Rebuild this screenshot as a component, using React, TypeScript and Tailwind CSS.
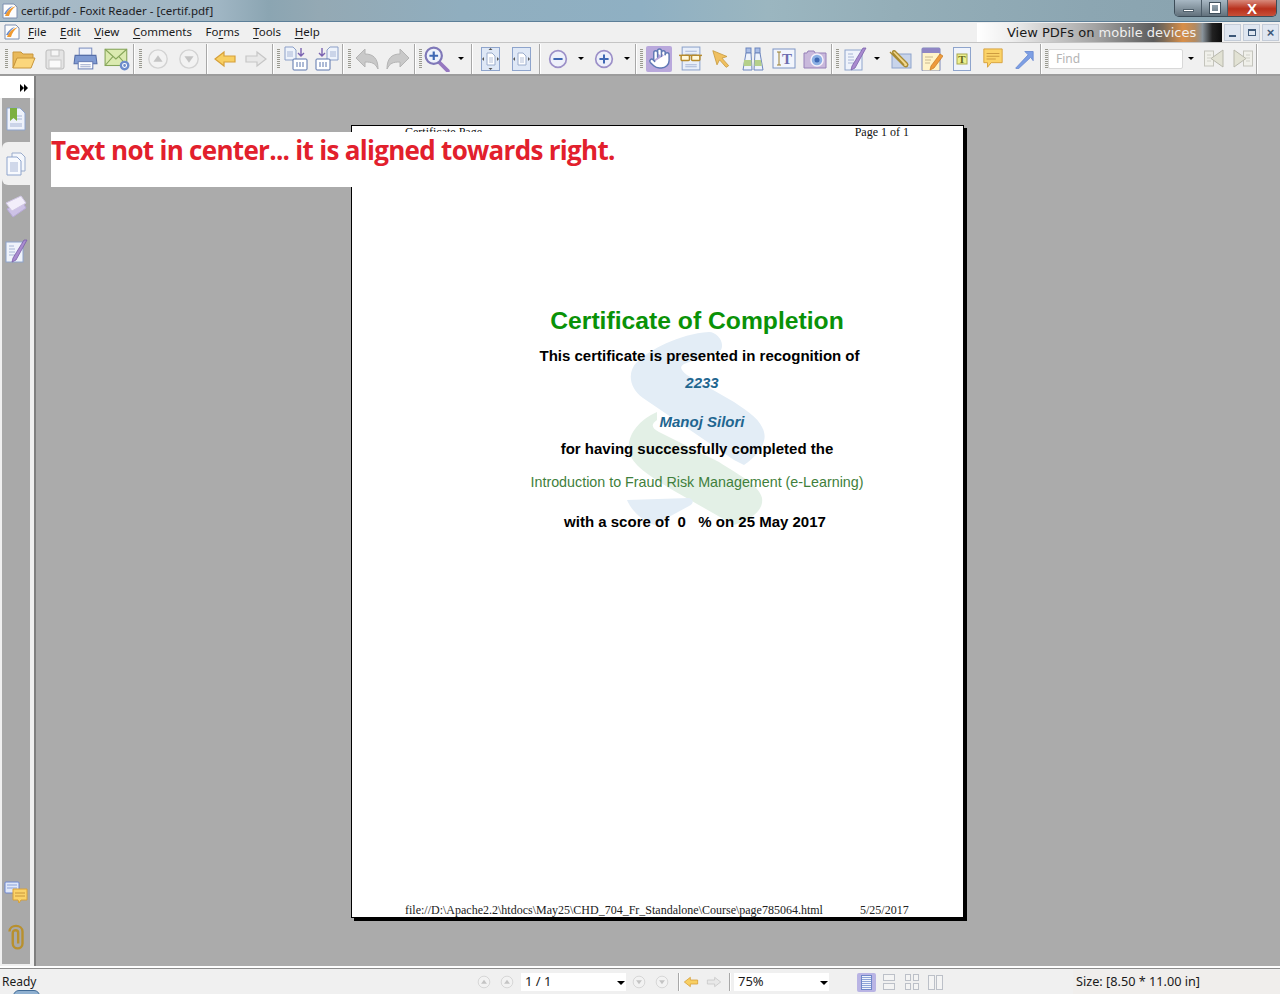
import type { ReactNode } from "react";
import { Hand } from "lucide-react";

const UI_FONT = "font-['Noto_Sans',sans-serif]";

function Ico({ children, size = 24 }: { children: ReactNode; size?: number }) {
  return (
    <svg width={size} height={size} viewBox="0 0 24 24" className="shrink-0">
      {children}
    </svg>
  );
}

function Slot({ children, w = "w-[31px]" }: { children: ReactNode; w?: string }) {
  return <div className={`${w} h-full shrink-0 flex items-center justify-center`}>{children}</div>;
}

function Sep({ className = "" }: { className?: string }) {
  return <div className={`w-[2px] h-[30px] shrink-0 bg-[#a8a8a8] border-r border-white ${className}`} />;
}

function Grip({ className = "" }: { className?: string }) {
  return <div className={`w-[3px] h-[20px] shrink-0 bg-[repeating-linear-gradient(180deg,#9a9a90_0_1px,#f0f0f0_1px_2px)] ${className}`} />;
}

function Caret({ w = "w-[16px]" }: { w?: string }) {
  return (
    <div className={`${w} h-full shrink-0 flex items-center justify-center`}>
      <div className="w-0 h-0 border-x-[3px] border-x-transparent border-t-[3px] border-t-black" />
    </div>
  );
}

const Folder = () => (
  <Ico>
    <path d="M1 5h8l2 2h10v5H5l-4 9z" fill="#e9b95a" stroke="#c8963c" />
    <path d="M1 21l4-10h18l-4 10z" fill="#fbd67c" stroke="#c8963c" />
  </Ico>
);
const Disk = () => (
  <Ico>
    <rect x="3" y="3" width="18" height="19" rx="2" fill="#e4e4e4" stroke="#bcbcbc" />
    <rect x="8" y="3" width="8" height="6" fill="#f6f6f6" stroke="#c4c4c4" />
    <rect x="6" y="13" width="12" height="8" fill="#fafafa" stroke="#c8c8c8" />
  </Ico>
);
const Printer = () => (
  <Ico size={25}>
    <rect x="6" y="2" width="12" height="7" fill="#eef1fa" stroke="#7d8fc0" />
    <path d="M2 9h20l1 8H1z" fill="#7f9ad2" stroke="#566ea8" />
    <rect x="5" y="15" width="14" height="7" fill="#fff" stroke="#6a7fb5" />
    <path d="M7 18h10M7 20h10" stroke="#9aa8cc" />
  </Ico>
);
const Mail = () => (
  <Ico size={26}>
    <rect x="1" y="3" width="20" height="15" fill="#dbeab0" stroke="#86a65a" />
    <path d="M1 3l10 9 10-9M1 18l7-8M21 18l-7-8" fill="none" stroke="#86a65a" />
    <circle cx="19" cy="18" r="4.5" fill="#6c8bcb" />
    <circle cx="19" cy="18" r="1.8" fill="none" stroke="#fff" />
  </Ico>
);
const NavCircle = ({ up, size = 22 }: { up?: boolean; size?: number }) => (
  <Ico size={size}>
    <circle cx="12" cy="12" r="10" fill="#f2f2f2" stroke="#d2d2d2" strokeWidth="1.5" />
    <path d={up ? "M7 15l5-7 5 7z" : "M7 9l5 7 5-7z"} fill="#c4c4c4" />
  </Ico>
);
const ArrowL = ({ on, size = 24 }: { on?: boolean; size?: number }) => (
  <Ico size={size}>
    <path d="M2 12l9-7v4h11v6H11v4z" fill={on ? "#f8cf62" : "#e8e8e8"} stroke={on ? "#d6a03a" : "#c6c6c6"} strokeWidth="1.2" />
  </Ico>
);
const ArrowR = ({ on, size = 24 }: { on?: boolean; size?: number }) => (
  <Ico size={size}>
    <path d="M22 12l-9-7v4H2v6h11v4z" fill={on ? "#f8cf62" : "#e8e8e8"} stroke={on ? "#d6a03a" : "#c6c6c6"} strokeWidth="1.2" />
  </Ico>
);
const Extract = ({ flip }: { flip?: boolean }) => (
  <svg width="24" height="25" viewBox="0 0 24 25" className="shrink-0" style={flip ? { transform: "scaleX(-1)" } : undefined}>
    <path d="M1 1h8l3 3v10H1z" fill="#eef3fb" stroke="#8b9fc8" />
    <path d="M3 6h6M3 8h6M3 10h6" stroke="#a8b6d6" />
    <path d="M17 2v7M14 7l3 3 3-3" fill="none" stroke="#7a62b0" strokeWidth="1.4" />
    <rect x="9" y="13" width="14" height="11" rx="1" fill="#fff" stroke="#5a74ac" />
    <path d="M13 16v5M16 16v5M19 16v5" stroke="#5a74ac" />
  </svg>
);
const Undo = ({ flip }: { flip?: boolean }) => (
  <svg width="24" height="24" viewBox="0 0 24 24" className="shrink-0" style={flip ? { transform: "scaleX(-1)" } : undefined}>
    <path d="M1 11l9-9v5c8 0 13 4 13 15-3-6-6-7-13-7v5z" fill="#c9c9c9" stroke="#b4b4b4" />
  </svg>
);
const Zoom = () => (
  <Ico size={26}>
    <path d="M14 15l8 8" stroke="#9678c0" strokeWidth="3.5" strokeLinecap="round" />
    <circle cx="9" cy="9" r="7.5" fill="#eef2fb" stroke="#7f78b8" strokeWidth="2" />
    <path d="M5 9h8M9 5v8" stroke="#3f68b4" strokeWidth="2" />
  </Ico>
);
const FitDoc = ({ full }: { full?: boolean }) => (
  <svg width="19" height="24" viewBox="0 0 19 24" className="shrink-0">
    <rect x="0.5" y="0.5" width="18" height="23" fill="#dfe8f6" stroke="#8ea4cc" />
    <path d="M6 6h5l3 3v9H6z" fill="#fff" stroke="#9aaccc" />
    <path d="M8 11h4M8 13h4M8 15h4" stroke="#b4c0d8" />
    <path d="M1 12l2-2v4zM18 12l-2-2v4z" fill="#555" />
    {full && <path d="M9.500 1l-2 2h4zM9.500 23l-2-2h4z" fill="#555" />}
  </svg>
);
const MathCircle = ({ plus }: { plus?: boolean }) => (
  <Ico size={20}>
    <circle cx="12" cy="12" r="10" fill="#eef0fa" stroke="#9c90c8" strokeWidth="2" />
    <path d={plus ? "M6.500 12h11M12 6.500v11" : "M6.500 12h11"} stroke="#3f68b4" strokeWidth="2.4" />
  </Ico>
);
const Glasses = () => (
  <Ico size={25}>
    <rect x="4" y="1" width="17" height="22" fill="#e9eff9" stroke="#8ea4cc" />
    <path d="M7 5h11M7 8h11M7 18h11M7 20h11" stroke="#a8b6d6" />
    <path d="M1 9h22" stroke="#b68a2c" strokeWidth="1.4" />
    <rect x="3" y="9" width="8" height="5" rx="1" fill="#fff8dc" stroke="#b68a2c" strokeWidth="1.4" />
    <rect x="13" y="9" width="8" height="5" rx="1" fill="#fff8dc" stroke="#b68a2c" strokeWidth="1.4" />
  </Ico>
);
const Cursor = () => (
  <Ico size={20}>
    <path d="M1 2l17 7-6 2 8 9-3 2-8-9-3 6z" fill="#f0c060" stroke="#c89a3c" />
  </Ico>
);
const Binoculars = () => (
  <Ico>
    <rect x="5" y="1" width="5" height="5" fill="#a9bde6" stroke="#6d86bd" />
    <rect x="14" y="1" width="5" height="5" fill="#a9bde6" stroke="#6d86bd" />
    <path d="M5 6h5l1 17H2zM14 6h5l3 17h-9z" fill="#edf2fb" stroke="#6d86bd" />
    <path d="M3 13h7.500v6H2.500zM13.500 13H20l.8 6h-7.300z" fill="#b5d08a" />
  </Ico>
);
const TextSel = () => (
  <Ico>
    <rect x="1" y="2" width="22" height="19" fill="#f2f5fc" stroke="#7d94c4" />
    <path d="M7 5v13M5 5h4M5 18h4" stroke="#9a8030" />
    <text x="15" y="17" textAnchor="middle" fontFamily="Liberation Serif" fontSize="15" fontWeight="700" fill="#6d6db0">T</text>
  </Ico>
);
const Camera = () => (
  <Ico>
    <path d="M1 6h3l1-2h6l1 2h11v15H1z" fill="#c9b9dc" stroke="#9680b8" />
    <circle cx="14" cy="13" r="6" fill="#8cb0e4" stroke="#f4f0fa" strokeWidth="1.5" />
    <circle cx="14" cy="13" r="2.500" fill="#3f68b4" />
  </Ico>
);
const TypeDoc = ({ size = 24 }: { size?: number }) => (
  <Ico size={size}>
    <rect x="2" y="3" width="17" height="20" fill="#eff3fb" stroke="#8ea4cc" />
    <path d="M5 7h5M5 10h6M5 13h6M5 16h6" stroke="#a8b6d6" />
    <path d="M23 1l-3 0L9 19l-1 4 4-2z" fill="#a98bd0" stroke="#7a60a8" strokeWidth="0.8" />
  </Ico>
);
const Attach = () => (
  <Ico>
    <rect x="4" y="7" width="19" height="14" fill="#c8d4ea" stroke="#8ea4cc" />
    <path d="M2 5l14 14c3 2 5-1 3-3L7 4C5 3 4 5 5 6l11 12" fill="#f2d890" stroke="#a88a30" strokeWidth="1.4" />
  </Ico>
);
const PaperClip = () => (
  <Ico size={26}>
    <path d="M6 7c0-7 12-7 12 0v11c0 6-9 6-9 0V8c0-3 5-3 5 0v10" fill="none" stroke="#b8902e" strokeWidth="2.2" />
  </Ico>
);
const Note = () => (
  <Ico>
    <rect x="3" y="1" width="18" height="23" rx="1" fill="#fff3c8" stroke="#7d88b8" />
    <rect x="3" y="1" width="18" height="5" fill="#8f86c4" />
    <path d="M6 10h8M6 13h6M6 16h5" stroke="#c8b890" />
    <path d="M21 7l3 2-9 12-4 2 1-4z" fill="#ee9a3c" stroke="#c47820" strokeWidth="0.7" />
  </Ico>
);
const TextBox = () => (
  <svg width="18" height="24" viewBox="0 0 18 24" className="shrink-0">
    <rect x="0.5" y="0.5" width="17" height="23" fill="#eff3fb" stroke="#8ea4cc" />
    <rect x="4" y="7" width="10" height="10" fill="#ecf090" stroke="#a8a850" />
    <text x="9" y="16" textAnchor="middle" fontFamily="Liberation Serif" fontSize="11" fontWeight="700" fill="#686820">T</text>
  </svg>
);
const Bubble = () => (
  <Ico size={22}>
    <path d="M2 1h20v15H10l-4 5v-5H2z" fill="#fbd368" stroke="#d6a03a" />
    <path d="M5 6h14M5 9h14M5 12h10" stroke="#c8963c" />
  </Ico>
);
const BlueArrow = () => (
  <Ico size={20}>
    <path d="M2 23L17 7l-4-4h10v11l-3-4L5 24z" fill="#7d9fe4" stroke="#6888d0" />
  </Ico>
);
const FindNav = ({ flip }: { flip?: boolean }) => (
  <svg width="20" height="19" viewBox="0 0 20 19" className="shrink-0" style={flip ? { transform: "scaleX(-1)" } : undefined}>
    <rect x="0.500" y="2" width="9" height="15" fill="#f0f0ea" stroke="#c4c4bc" />
    <path d="M3 6h4M3 9h4M3 12h4" stroke="#d0d0c8" />
    <path d="M19 1L7 9.500 19 18z" fill="#e2e2d4" stroke="#b8b8ac" />
  </svg>
);

function Toolbar() {
  return (
    <div className="h-[33px] flex items-center pl-[5px] bg-[#f0f0f0] border-b-[2px] border-[#9c9c9c]">
      <Grip />
      <Slot><Folder /></Slot>
      <Slot><Disk /></Slot>
      <Slot><Printer /></Slot>
      <Slot><Mail /></Slot>
      <Sep className="ml-[1px]" />
      <Grip className="ml-[4px]" />
      <Slot><NavCircle up /></Slot>
      <Slot><NavCircle /></Slot>
      <Sep className="ml-[2px] mr-[1px]" />
      <Slot><ArrowL on /></Slot>
      <Slot><ArrowR /></Slot>
      <Sep className="ml-[1px]" />
      <Grip className="ml-[3px]" />
      <Slot><Extract /></Slot>
      <Slot><Extract flip /></Slot>
      <Sep />
      <Grip className="ml-[4px]" />
      <Slot><Undo /></Slot>
      <Slot><Undo flip /></Slot>
      <Sep className="ml-[1px]" />
      <Grip className="ml-[3px]" />
      <Slot w="w-[29px]"><Zoom /></Slot>
      <Caret w="w-[20px]" />
      <Sep />
      <div className="w-[2px]" />
      <Slot><FitDoc full /></Slot>
      <Slot><FitDoc /></Slot>
      <Sep className="mx-[2px]" />
      <Slot w="w-[30px]"><MathCircle /></Slot>
      <Caret w="w-[15px]" />
      <Slot><MathCircle plus /></Slot>
      <Caret />
      <Sep />
      <Grip className="ml-[3px]" />
      <Slot w="w-[32px]">
        <div className="w-[26px] h-[26px] rounded-[2px] bg-[#b9a8dc] flex items-center justify-center">
          <Hand size={23} fill="#fff" color="#5f78b4" strokeWidth={1.5} />
        </div>
      </Slot>
      <Slot><Glasses /></Slot>
      <Slot><Cursor /></Slot>
      <Slot><Binoculars /></Slot>
      <Slot><TextSel /></Slot>
      <Slot><Camera /></Slot>
      <Sep className="ml-[1px]" />
      <Grip className="ml-[3px]" />
      <Slot><TypeDoc /></Slot>
      <Caret w="w-[14px]" />
      <Slot><Attach /></Slot>
      <Slot><Note /></Slot>
      <Slot><TextBox /></Slot>
      <Slot><Bubble /></Slot>
      <Slot><BlueArrow /></Slot>
      <Sep className="ml-[1px]" />
      <Grip className="ml-[3px]" />
      <div className="w-[135px] h-[20px] bg-white border border-[#d8d8d8] rounded-[2px] pl-[7px] text-[12px] leading-[18px] text-[#b4b4b4]">
        Find
      </div>
      <Caret w="w-[16px]" />
      <Slot w="w-[30px]"><FindNav /></Slot>
      <Slot w="w-[27px]"><FindNav flip /></Slot>
      <Sep />
    </div>
  );
}

function MenuItem({ k, rest, pre = "" }: { k: string; rest: string; pre?: string }) {
  return (
    <span>
      {pre}
      <span className="underline underline-offset-2">{k}</span>
      {rest}
    </span>
  );
}

function WinBtn({ children }: { children: ReactNode }) {
  return (
    <div className="w-[17px] h-[17px] border border-[#c4ccd8] bg-[#dfe6f0] flex items-center justify-center text-[#3d5878]">
      {children}
    </div>
  );
}

function AppLogo() {
  return (
    <svg width="16" height="16" viewBox="0 0 16 16" className="shrink-0">
      <path d="M1 1h11l3 3v11H1z" fill="#fdfdfd" stroke="#7d8fb0" />
      <path d="M3 13C5 7 9 5 14 3 10 6 8 9 7 13z" fill="#f09a30" />
      <path d="M2 11c2-4 5-7 9-8-3 2-6 5-7 8z" fill="#6a8ac8" />
    </svg>
  );
}

function TitleBar() {
  return (
    <div className="h-[22px] flex items-start border-b border-[#5d7f98] bg-[linear-gradient(90deg,#a9bbc8_0%,#a0b6c4_17%,#8ba5b2_21%,#94a9b4_25%,#90aebf_36%,#8fb0c3_50%,#9bb6c0_60%,#94aeb8_70%,#8ca6b2_85%,#88a2ae_100%)]">
      <div className="w-[21px] h-full pl-[2px] pt-[3px]">
        <AppLogo />
      </div>
      <span className={`text-[11.500px] leading-[21px] text-[#1c2024] ${UI_FONT}`}>certif.pdf - Foxit Reader - [certif.pdf]</span>
      <div className="ml-auto mr-[3px] w-[103px] h-[17px] flex rounded-b-[5px] overflow-hidden border border-t-0 border-[#3c4c58]">
        <div className="w-[27px] bg-[linear-gradient(180deg,#a8b8c4,#62717c)] flex items-center justify-center border-r border-[#4c5c68]">
          <div className="w-[11px] h-[3px] mt-[4px] bg-white border border-[#50606c]" />
        </div>
        <div className="w-[26px] bg-[linear-gradient(180deg,#a8b8c4,#62717c)] flex items-center justify-center border-r border-[#4c5c68]">
          <div className="w-[10px] h-[10px] border-2 border-white outline outline-[#40505c]" />
        </div>
        <div className="flex-1 bg-[linear-gradient(180deg,#d88a7c,#b8301c_55%,#c85038)] flex items-center justify-center text-white text-[15px] leading-none font-bold font-['Liberation_Sans',sans-serif]">
          X
        </div>
      </div>
    </div>
  );
}

function MenuBar() {
  return (
    <div className={`h-[21px] flex items-center bg-[#f0f0f0] border-b border-[#c4c4c4] text-[11.500px] text-[#1a1a1a] ${UI_FONT}`}>
      <div className="w-[28px] pl-[4px] shrink-0">
        <AppLogo />
      </div>
      <div className="flex gap-[13.600px] pb-[1px]">
        <MenuItem k="F" rest="ile" />
        <MenuItem k="E" rest="dit" />
        <MenuItem k="V" rest="iew" />
        <MenuItem k="C" rest="omments" />
        <MenuItem pre="Fo" k="r" rest="ms" />
        <MenuItem k="T" rest="ools" />
        <MenuItem k="H" rest="elp" />
      </div>
      <div className="ml-auto w-[245px] h-[19px] mr-[2px] pl-[30px] overflow-hidden whitespace-nowrap text-[13px] leading-[19px] font-['DejaVu_Sans',sans-serif] bg-[linear-gradient(90deg,#ffffff_0%,#eeeeee_14%,#a4a4a4_48%,#5c5c5c_72%,#7a6a58_76%,#d88e48_84%,#b48a60_89%,#8a949c_92%,#222222_96%,#0c0c0c_100%)]">
        <span className="text-[#1a1a1a]">View PDFs on </span>
        <span className="text-[#efefef]">mobile devices</span>
      </div>
      <div className="flex gap-[2px] pr-[1px]">
        <WinBtn><div className="w-[7px] h-[2px] bg-[#3d5878] mt-[7px]" /></WinBtn>
        <WinBtn><div className="w-[8px] h-[7px] border border-[#3d5878] border-t-2" /></WinBtn>
        <WinBtn><span className="text-[13px] leading-none font-bold font-['Liberation_Sans',sans-serif]">×</span></WinBtn>
      </div>
    </div>
  );
}

function Sidebar() {
  return (
    <div className="w-[36px] shrink-0 flex flex-col bg-[#f0f0f0] border-r-2 border-[#7f7f7f]">
      <div className="h-[22px] bg-white flex items-center justify-end pr-[6px] pt-[1px]">
        <div className="flex">
          <div className="w-0 h-0 border-y-[4px] border-y-transparent border-l-[4px] border-l-black" />
          <div className="w-0 h-0 border-y-[4px] border-y-transparent border-l-[4px] border-l-black" />
        </div>
      </div>
      <div className="flex-1 ml-[2px] mr-[4px] mb-[2px] bg-[#a9a9a9] flex flex-col">
        <div className="h-[44px] pb-[3px] flex items-center justify-center">
          <svg width="20" height="24" viewBox="0 0 20 24">
            <path d="M1 1h13l5 5v17H1z" fill="#eef2fb" stroke="#8ea4cc" />
            <path d="M4 1h7v13l-3.500-3L4 14z" fill="#7db040" />
            <path d="M4 17h12M4 19h12M11 9h5M11 12h5" stroke="#a8b6d6" />
          </svg>
        </div>
        <div className="h-[43px] bg-[#f0f0f0] rounded-l-[6px] flex items-center justify-center">
          <svg width="20" height="24" viewBox="0 0 20 24">
            <path d="M6 1h9l4 4v14H6z" fill="#f4f7fc" stroke="#9aaccc" />
            <path d="M1 5h10l4 4v14H1z" fill="#f8fafe" stroke="#8ea4cc" />
            <path d="M4 11h8M4 13h8M4 15h8M4 17h8M4 19h8" stroke="#a8b6d6" />
          </svg>
        </div>
        <div className="h-[44px] flex items-center justify-center">
          <svg width="22" height="24" viewBox="0 0 22 24">
            <path d="M2 14l15-8 4 7-13 9z" fill="#cdc2e6" stroke="#b8aad8" />
            <path d="M1 8l15-7 5 7-14 8z" fill="#f2eefa" stroke="#d0c6e4" />
          </svg>
        </div>
        <div className="h-[44px] flex items-center justify-center">
          <TypeDoc />
        </div>
        <div className="flex-1" />
        <div className="h-[44px] flex items-center justify-center">
          <svg width="24" height="24" viewBox="0 0 24 24">
            <rect x="1" y="1" width="14" height="11" rx="1" fill="#dfe8fa" stroke="#6d86d0" />
            <path d="M3 4h10M3 7h10" stroke="#8aa0d8" />
            <path d="M9 8h14v11h-6l-2 3-1-3H9z" fill="#fbd368" stroke="#d6a03a" />
            <path d="M11 12h10M11 15h10" stroke="#c8963c" />
          </svg>
        </div>
        <div className="h-[44px] mb-[5px] flex items-center justify-center">
          <PaperClip />
        </div>
      </div>
    </div>
  );
}

function Watermark() {
  return (
    <svg width="170" height="220" viewBox="0 0 170 220" className="absolute left-[257px] top-[194px]">
      <path d="M100 12C70 14 40 30 28 42 18 52 20 68 34 78L125 140 135 145C150 135 158 122 155 112 152 100 140 92 125 82L78 55C72 50 70 47 75 44L112 30C116 22 108 12 100 12Z" fill="#e3edf6" />
      <path d="M48 92C30 100 18 115 20 130 22 145 40 155 60 168L125 205C142 200 155 190 153 178 150 165 130 155 110 142L50 112C42 108 42 104 48 100Z" fill="#e3f0e6" />
      <path d="M18 180L80 178C85 180 85 183 80 186L45 205C32 200 22 190 18 180Z" fill="#e3edf6" />
    </svg>
  );
}

function PdfPage() {
  return (
    <div className="relative w-[613px] h-[793px] mt-[49px] ml-[315px] bg-white border border-black shadow-[3px_3px_0_#000] flex flex-col font-['Liberation_Sans',sans-serif]">
      <Watermark />
      <div className="h-[13px] flex justify-between pl-[53px] pr-[54px] text-[12px] leading-[12px] text-[#111] font-['Liberation_Serif',serif]">
        <span>Certificate Page</span>
        <span>Page 1 of 1</span>
      </div>
      <div className="relative ml-[79px] text-center pt-[167px]">
        <h1 className="text-[24.700px] leading-[29px] font-bold text-[#0a9207]">Certificate of Completion</h1>
        <p className="mt-[12px] pl-[5px] text-[15px] leading-[17px] font-bold text-black">This certificate is presented in recognition of</p>
        <p className="mt-[10px] pl-[10px] text-[15px] leading-[17px] font-bold italic text-[#1f6690]">2233</p>
        <p className="mt-[22px] pl-[10px] text-[15px] leading-[17px] font-bold italic text-[#1f6690]">Manoj Silori</p>
        <p className="mt-[10px] text-[15px] leading-[17px] font-bold text-black">for having successfully completed the</p>
        <p className="mt-[17px] text-[14.300px] leading-[17px] text-[#3f7f3c]">Introduction to Fraud Risk Management (e-Learning)</p>
        <p className="mt-[22px] pr-[4px] text-[15px] leading-[17px] font-bold text-black whitespace-pre">with a score of  0   % on 25 May 2017</p>
      </div>
      <div className="mt-auto pl-[53px] flex text-[12px] leading-[13px] text-[#222] font-['Liberation_Serif',serif]">
        <span className="w-[455px]">file://D:\Apache2.2\htdocs\May25\CHD_704_Fr_Standalone\Course\page785064.html</span>
        <span>5/25/2017</span>
      </div>
    </div>
  );
}

function StatusBar() {
  return (
    <div className={`h-[28px] border-t-2 border-[#fefefe] shadow-[inset_0_1px_0_#8c8c8c] bg-[#f0f0f0] flex items-center text-[12px] text-[#1a1a1a] pt-[2px] relative overflow-hidden ${UI_FONT}`}>
      <span className="w-[473px] pl-[2px] shrink-0">Ready</span>
      <Slot w="w-[22px]"><NavCircle up size={14} /></Slot>
      <Slot w="w-[24px]"><NavCircle up size={14} /></Slot>
      <div className="w-[105px] h-[18px] ml-[2px] bg-white pl-[4px] flex items-center shrink-0 relative text-[13px]">
        1 / 1
        <div className="absolute right-[1px] top-[8px] w-0 h-0 border-x-[4px] border-x-transparent border-t-[4px] border-t-black" />
      </div>
      <Slot w="w-[26px]"><NavCircle size={14} /></Slot>
      <Slot w="w-[20px]"><NavCircle size={14} /></Slot>
      <Sep className="ml-[6px] !h-[18px]" />
      <Slot w="w-[22px]"><ArrowL on size={16} /></Slot>
      <Slot w="w-[24px]"><ArrowR size={16} /></Slot>
      <Sep className="ml-[3px] !h-[18px]" />
      <div className="w-[95px] h-[18px] ml-[3px] bg-white pl-[4px] flex items-center shrink-0 relative text-[13px]">
        75%
        <div className="absolute right-[1px] top-[8px] w-0 h-0 border-x-[4px] border-x-transparent border-t-[4px] border-t-black" />
      </div>
      <div className="w-[28px] shrink-0" />
      <div className="w-[19px] h-[19px] rounded-[2px] bg-[#b9b4e4] flex items-center justify-center shrink-0">
        <div className="w-[11px] h-[15px] border border-[#6f86c8] bg-[repeating-linear-gradient(180deg,#f0f4fc_0_1px,#8ea4d8_1px_2px)]" />
      </div>
      <Slot w="w-[26px]">
        <div className="w-[12px] flex flex-col gap-[2px]">
          <div className="h-[7px] border border-[#bcc0c8] bg-[#f4f4f4]" />
          <div className="h-[7px] border border-[#bcc0c8] bg-[#f4f4f4]" />
        </div>
      </Slot>
      <Slot w="w-[20px]">
        <div className="w-[14px] grid grid-cols-2 gap-[2px]">
          <div className="h-[7px] border border-[#bcc0c8] bg-[#f4f4f4]" />
          <div className="h-[7px] border border-[#bcc0c8] bg-[#f4f4f4]" />
          <div className="h-[7px] border border-[#bcc0c8] bg-[#f4f4f4]" />
          <div className="h-[7px] border border-[#bcc0c8] bg-[#f4f4f4]" />
        </div>
      </Slot>
      <Slot w="w-[26px]">
        <div className="flex gap-[1px]">
          <div className="w-[7px] h-[15px] border border-[#bcc0c8] bg-[#f4f4f4]" />
          <div className="w-[7px] h-[15px] border border-[#bcc0c8] bg-[#f4f4f4]" />
        </div>
      </Slot>
      <div className="ml-auto w-[207px] h-full pl-[3px] flex items-center bg-[#f0eeec] text-[12.700px]">Size: [8.50 * 11.00 in]</div>
      <div className="absolute left-[13px] top-[22px] w-[27px] h-[12px] rounded-full bg-[#8fb0d0] border border-[#3f6a96]" />
    </div>
  );
}

export default function App() {
  return (
    <div className="w-[1280px] h-[994px] flex flex-col overflow-hidden bg-[#f0f0f0]">
      <TitleBar />
      <MenuBar />
      <Toolbar />
      <div className="flex-1 min-h-0 flex relative">
        <Sidebar />
        <div className="flex-1 bg-[#ababab] overflow-hidden">
          <PdfPage />
        </div>
        {/* pasted note sitting over the page */}
        <div className="absolute left-[51px] top-[56px] w-[301px] h-[55px] bg-white" />
        <div className="absolute left-[352px] top-[56px] w-[300px] h-[55px] bg-white" />
        <div className="absolute left-[51px] top-[56px] whitespace-nowrap text-[26px] leading-[36px] font-bold text-[#e2202c] font-['Open_Sans',sans-serif] tracking-[-0.7px]">
          Text not in center... it is aligned towards right.
        </div>
      </div>
      <StatusBar />
    </div>
  );
}
